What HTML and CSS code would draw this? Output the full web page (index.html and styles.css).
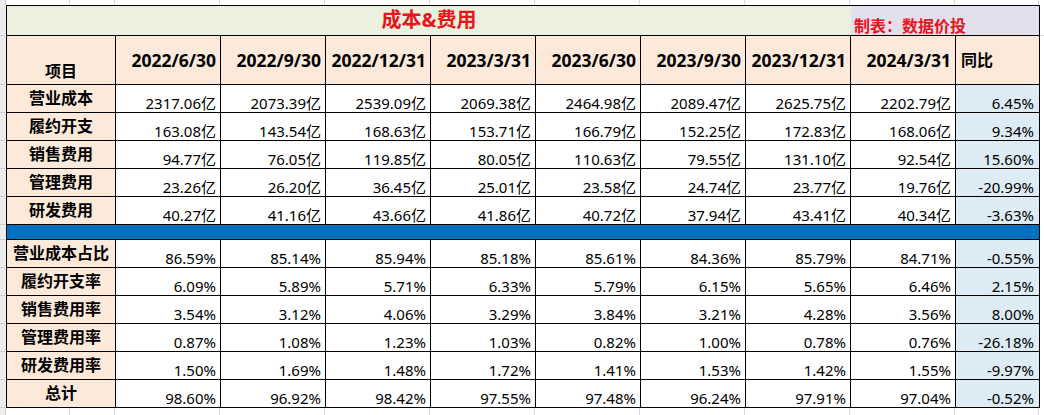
FILE: index.html
```html
<!DOCTYPE html>
<html lang="zh-CN">
<head>
<meta charset="utf-8">
<title>成本&amp;费用</title>
<link rel="stylesheet" href="styles.css">
</head>
<body>
<div class="sheet">
  <div class="gutter">
    <span class="g-head"></span><span class="g-a"></span><span class="g-b"></span>
    <span class="g-c"></span><span class="g-c"></span><span class="g-c"></span><span class="g-c"></span>
    <span class="g-c"></span><span class="g-c"></span><span class="g-c"></span><span class="g-c"></span>
    <span class="g-d"></span><span class="g-rest"></span>
  </div>
  <div class="middle">
    <div class="rowheads">
      <i class="rh-title"></i><i class="rh-head"></i>
      <i class="rh"></i><i class="rh"></i><i class="rh"></i><i class="rh"></i><i class="rh"></i>
      <i class="rh-band"></i>
      <i class="rh"></i><i class="rh"></i><i class="rh"></i><i class="rh"></i><i class="rh"></i><i class="rh"></i>
    </div>
    <div class="cost">
      <div class="c title">成本&amp;费用</div>
      <div class="c credit">制表：数据价投</div>

      <div class="c hd lab-head">项目</div>
      <div class="c hd">2022/6/30</div><div class="c hd">2022/9/30</div><div class="c hd">2022/12/31</div><div class="c hd">2023/3/31</div>
      <div class="c hd">2023/6/30</div><div class="c hd">2023/9/30</div><div class="c hd">2023/12/31</div><div class="c hd">2024/3/31</div>
      <div class="c hd yoy-head">同比</div>

      <div class="c lab">营业成本</div>
      <div class="c n">2317.06亿</div><div class="c n">2073.39亿</div><div class="c n">2539.09亿</div><div class="c n">2069.38亿</div>
      <div class="c n">2464.98亿</div><div class="c n">2089.47亿</div><div class="c n">2625.75亿</div><div class="c n">2202.79亿</div>
      <div class="c n yoy">6.45%</div>

      <div class="c lab">履约开支</div>
      <div class="c n">163.08亿</div><div class="c n">143.54亿</div><div class="c n">168.63亿</div><div class="c n">153.71亿</div>
      <div class="c n">166.79亿</div><div class="c n">152.25亿</div><div class="c n">172.83亿</div><div class="c n">168.06亿</div>
      <div class="c n yoy">9.34%</div>

      <div class="c lab">销售费用</div>
      <div class="c n">94.77亿</div><div class="c n">76.05亿</div><div class="c n">119.85亿</div><div class="c n">80.05亿</div>
      <div class="c n">110.63亿</div><div class="c n">79.55亿</div><div class="c n">131.10亿</div><div class="c n">92.54亿</div>
      <div class="c n yoy">15.60%</div>

      <div class="c lab">管理费用</div>
      <div class="c n">23.26亿</div><div class="c n">26.20亿</div><div class="c n">36.45亿</div><div class="c n">25.01亿</div>
      <div class="c n">23.58亿</div><div class="c n">24.74亿</div><div class="c n">23.77亿</div><div class="c n">19.76亿</div>
      <div class="c n yoy">-20.99%</div>

      <div class="c lab">研发费用</div>
      <div class="c n">40.27亿</div><div class="c n">41.16亿</div><div class="c n">43.66亿</div><div class="c n">41.86亿</div>
      <div class="c n">40.72亿</div><div class="c n">37.94亿</div><div class="c n">43.41亿</div><div class="c n">40.34亿</div>
      <div class="c n yoy">-3.63%</div>

      <div class="c band"></div>

      <div class="c lab">营业成本占比</div>
      <div class="c n">86.59%</div><div class="c n">85.14%</div><div class="c n">85.94%</div><div class="c n">85.18%</div>
      <div class="c n">85.61%</div><div class="c n">84.36%</div><div class="c n">85.79%</div><div class="c n">84.71%</div>
      <div class="c n yoy">-0.55%</div>

      <div class="c lab">履约开支率</div>
      <div class="c n">6.09%</div><div class="c n">5.89%</div><div class="c n">5.71%</div><div class="c n">6.33%</div>
      <div class="c n">5.79%</div><div class="c n">6.15%</div><div class="c n">5.65%</div><div class="c n">6.46%</div>
      <div class="c n yoy">2.15%</div>

      <div class="c lab">销售费用率</div>
      <div class="c n">3.54%</div><div class="c n">3.12%</div><div class="c n">4.06%</div><div class="c n">3.29%</div>
      <div class="c n">3.84%</div><div class="c n">3.21%</div><div class="c n">4.28%</div><div class="c n">3.56%</div>
      <div class="c n yoy">8.00%</div>

      <div class="c lab">管理费用率</div>
      <div class="c n">0.87%</div><div class="c n">1.08%</div><div class="c n">1.23%</div><div class="c n">1.03%</div>
      <div class="c n">0.82%</div><div class="c n">1.00%</div><div class="c n">0.78%</div><div class="c n">0.76%</div>
      <div class="c n yoy">-26.18%</div>

      <div class="c lab">研发费用率</div>
      <div class="c n">1.50%</div><div class="c n">1.69%</div><div class="c n">1.48%</div><div class="c n">1.72%</div>
      <div class="c n">1.41%</div><div class="c n">1.53%</div><div class="c n">1.42%</div><div class="c n">1.55%</div>
      <div class="c n yoy">-9.97%</div>

      <div class="c lab">总计</div>
      <div class="c n">98.60%</div><div class="c n">96.92%</div><div class="c n">98.42%</div><div class="c n">97.55%</div>
      <div class="c n">97.48%</div><div class="c n">96.24%</div><div class="c n">97.91%</div><div class="c n">97.04%</div>
      <div class="c n yoy">-0.52%</div>
    </div>
    <div class="rightpad"></div>
  </div>
  <div class="gutter bottom">
    <span class="g-head"></span><span class="g-a"></span><span class="g-b"></span>
    <span class="g-c"></span><span class="g-c"></span><span class="g-c"></span><span class="g-c"></span>
    <span class="g-c"></span><span class="g-c"></span><span class="g-c"></span><span class="g-c"></span>
    <span class="g-d"></span><span class="g-rest"></span>
  </div>
</div>
</body>
</html>
```

FILE: styles.css
```css
html, body {
  margin: 0;
  padding: 0;
  background: #ffffff;
}

body {
  font-family: "Noto Sans", "Noto Sans CJK SC", sans-serif;
  color: #000;
}

.sheet {
  width: 1044px;
  height: 415px;
  overflow: hidden;
  display: flex;
  flex-direction: column;
}

/* spreadsheet grid strips above and below the table */
.gutter {
  display: flex;
  height: 5px;
  flex: none;
}
.gutter.bottom {
  height: 8px;
}
.gutter span {
  flex: none;
  box-sizing: border-box;
  border-right: 1px solid #dadada;
  height: 100%;
}
.gutter .g-head { width: 6px; background: #ececec; border-right-color: #cfcfcf; }
.gutter .g-a { width: 64px; }
.gutter .g-b { width: 45px; }
.gutter .g-c { width: 105px; }
.gutter .g-d { width: 84px; }
.gutter .g-rest { flex: 1; border-right: none; }

.middle {
  display: flex;
  flex: none;
}

.rowheads {
  width: 6px;
  flex: none;
  display: flex;
  flex-direction: column;
  background: #ececec;
}
.rowheads i {
  display: block;
  box-sizing: border-box;
  border-bottom: 1px solid #d0d0d0;
  flex: none;
}
.rowheads .rh-title { height: 31px; }
.rowheads .rh-head { height: 49px; }
.rowheads .rh { height: 28px; }
.rowheads .rh-band { height: 15px; }

.rightpad {
  flex: 1;
  background-image: linear-gradient(#dadada, #dadada);
  background-size: 100% 1px;
  background-repeat: no-repeat;
  background-position: 0 30px;
}

/* the sheet table as a grid */
.cost {
  flex: none;
  display: grid;
  grid-template-columns: 109px repeat(8, 105px) 84px;
  grid-template-rows: 30px 49px repeat(5, 28px) 15px repeat(6, 28px);
  border-top: 1px solid #000;
  border-left: 1px solid #000;
}

.c {
  box-sizing: border-box;
  border-right: 1px solid #000;
  border-bottom: 1px solid #000;
  display: flex;
  align-items: flex-end;
  justify-content: flex-end;
  padding: 0 4px 0 4px;
  white-space: nowrap;
  overflow: hidden;
  font-size: 15px;
  line-height: 18px;
}

.title {
  grid-column: 1 / 9;
  background: #ebf1de;
  color: #e8141a;
  font-size: 20px;
  line-height: 24px;
  font-weight: 700;
  justify-content: center;
  align-items: center;
  border-right: none;
  padding-bottom: 1px;
}
.credit {
  grid-column: 9 / 11;
  background: #e4dfec;
  color: #e8141a;
  font-size: 16px;
  line-height: 18px;
  font-weight: 700;
  justify-content: flex-start;
  padding-left: 3px;
  padding-bottom: 0;
}

.hd {
  background: #fde9d9;
  font-size: 17.5px;
  line-height: 22px;
  font-weight: 700;
  align-items: center;
}
.hd.lab-head {
  font-size: 16px;
  justify-content: center;
  align-items: flex-end;
  padding-bottom: 2px;
}
.hd.yoy-head {
  font-size: 16px;
  justify-content: flex-start;
  padding-left: 5px;
}

.lab {
  background: #fde9d9;
  font-size: 16px;
  line-height: 20px;
  font-weight: 700;
  justify-content: center;
  align-items: center;
  padding: 0 2px 1px 2px;
}

.yoy {
  background: #dcebf4;
  padding-right: 5px;
}

.band {
  grid-column: 1 / -1;
  background: #0070c0;
  padding: 0;
}
```
